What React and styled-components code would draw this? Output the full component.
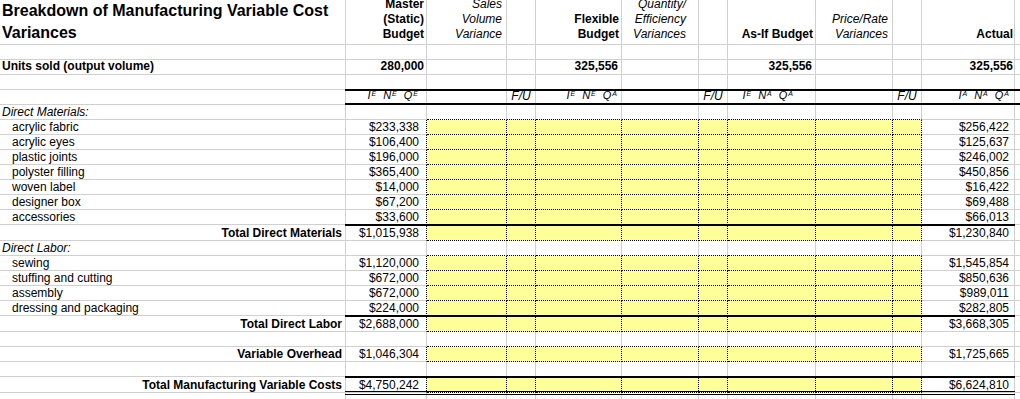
import React from "react";
import styled, { createGlobalStyle, css } from "styled-components";

const GlobalStyle = createGlobalStyle`
  html, body {
    margin: 0;
    padding: 0;
    background: #ffffff;
  }
  body {
    font-family: "Liberation Sans", Arial, sans-serif;
    font-size: 12px;
    color: #000000;
  }
`;

// === Sheet constants ===
const COLUMNS = "346px 81px 80px 29px 86px 77px 29px 88px 77px 29px 93px 1fr";
const GRID = "#d0d0d0";
const YELLOW = "#ffff99";
const VARIANCE_COLS = [0, 1, 2, 3, 4, 5, 6, 7];

// === Styled Components ===
const Sheet = styled.div`
  width: 1020px;
  height: 399px;
  overflow: hidden;
  display: flex;
  flex-direction: column;
`;

const Row = styled.div`
  flex: none;
  display: grid;
  grid-template-columns: ${COLUMNS};
  height: ${(p) => p.$h || 15}px;
`;

const Cell = styled.div`
  position: relative;
  box-sizing: border-box;
  min-width: 0;
  display: flex;
  flex-direction: column;
  justify-content: ${(p) => (p.$valign === "top" ? "flex-start" : "flex-end")};
  text-align: ${(p) => p.$align || "left"};
  padding: 0 ${(p) => p.$pr ?? 2}px ${(p) => p.$pb || 0}px ${(p) => p.$pl ?? 2}px;
  line-height: ${(p) => p.$lh || 14}px;
  font-weight: ${(p) => (p.$bold ? 700 : 400)};
  font-style: ${(p) => (p.$italic ? "italic" : "normal")};
  white-space: nowrap;
  overflow: hidden;
  background: ${(p) => (p.$fill ? YELLOW : "transparent")};
  border-right: ${(p) =>
    p.$last ? "none" : p.$fill || p.$edgeR ? "1px dotted #000" : `1px solid ${GRID}`};
  border-bottom: ${(p) => (p.$fill || p.$dotB ? "1px dotted #000" : `1px solid ${GRID}`)};

  ${(p) =>
    p.$thick &&
    css`
      overflow: visible;
      &::before {
        content: "";
        position: absolute;
        left: -1px;
        right: -1px;
        top: -1px;
        height: 2px;
        background: #000;
        z-index: 2;
      }
    `}

  ${(p) =>
    p.$thickB &&
    css`
      overflow: visible;
      &::after {
        content: "";
        position: absolute;
        left: -1px;
        right: -1px;
        bottom: -1px;
        height: 2px;
        background: #000;
        z-index: 2;
      }
    `}

  ${(p) =>
    p.$double &&
    css`
      overflow: visible;
      &::after {
        content: "";
        position: absolute;
        left: -1px;
        right: -1px;
        top: calc(100% - 1px);
        height: 4px;
        box-sizing: border-box;
        border-top: 1px solid #000;
        border-bottom: 1px solid #000;
        z-index: 2;
      }
    `}
`;

const HeadCell = styled(Cell)`
  line-height: 15px;
  padding-bottom: 2px;
`;

const Title = styled.div`
  font-size: 16px;
  line-height: 22px;
  font-weight: 700;
`;

const Sym = styled.span`
  font-style: italic;
  font-size: 11px;
  line-height: 10px;
  white-space: nowrap;
`;

const Sup = styled.span`
  display: inline-block;
  font-size: 7px;
  line-height: 6px;
  vertical-align: 3px;
  margin: 0 ${(p) => (p.$end ? 0 : 7)}px 0 1px;
`;

// === Data ===
const materials = [
  ["acrylic fabric", "$233,338", "$256,422"],
  ["acrylic eyes", "$106,400", "$125,637"],
  ["plastic joints", "$196,000", "$246,002"],
  ["polyster filling", "$365,400", "$450,856"],
  ["woven label", "$14,000", "$16,422"],
  ["designer box", "$67,200", "$69,488"],
  ["accessories", "$33,600", "$66,013"],
];

const labor = [
  ["sewing", "$1,120,000", "$1,545,854"],
  ["stuffing and cutting", "$672,000", "$850,636"],
  ["assembly", "$672,000", "$989,011"],
  ["dressing and packaging", "$224,000", "$282,805"],
];

// === Pieces ===
const Inq = ({ code }) => (
  <Sym>
    I<Sup>{code[0]}</Sup>N<Sup>{code[1]}</Sup>Q<Sup $end>{code[2]}</Sup>
  </Sym>
);

const LineRow = ({ label, kind, master, actual, fill, pre, thick, double, h }) => (
  <Row $h={h}>
    <Cell
      $align={kind === "total" ? "right" : "left"}
      $pl={kind === "item" ? 12 : 2}
      $pr={3}
      $bold={kind === "total"}
      $italic={kind === "section"}
    >
      {label}
    </Cell>
    <Cell $align="right" $pr={7} $edgeR={fill} $thick={thick} $double={double}>
      {master}
    </Cell>
    {VARIANCE_COLS.map((i) => (
      <Cell key={i} $fill={fill} $dotB={pre} $thick={thick} $double={double} />
    ))}
    <Cell $align="right" $pr={5} $thick={thick} $double={double}>
      {actual}
    </Cell>
    <Cell $last />
  </Row>
);

const BlankRow = ({ pre }) => <LineRow pre={pre} />;

export default function App() {
  return (
    <>
      <GlobalStyle />
      <Sheet>
        <Row $h={45}>
          <Cell $pb={0}>
            <Title>
              Breakdown of Manufacturing Variable Cost
              <br />
              Variances
            </Title>
          </Cell>
          <HeadCell $align="right" $bold>
            <div>
              Master
              <br />
              (Static)
              <br />
              Budget
            </div>
          </HeadCell>
          <HeadCell $align="right" $pr={4} $italic>
            <div>
              Sales
              <br />
              Volume
              <br />
              Variance
            </div>
          </HeadCell>
          <HeadCell />
          <HeadCell $align="right" $bold>
            <div>
              Flexible
              <br />
              Budget
            </div>
          </HeadCell>
          <HeadCell $align="right" $pr={12} $italic $pb={3}>
            <div>
              Quantity/
              <br />
              Efficiency
              <br />
              Variances
            </div>
          </HeadCell>
          <HeadCell />
          <HeadCell $align="right" $bold>
            <div>As-If Budget</div>
          </HeadCell>
          <HeadCell $align="right" $pr={4} $italic $pb={3}>
            <div>
              Price/Rate
              <br />
              Variances
            </div>
          </HeadCell>
          <HeadCell />
          <HeadCell $align="right" $bold $pr={1}>
            <div>Actual</div>
          </HeadCell>
          <HeadCell $last />
        </Row>

        <BlankRow />

        <Row>
          <Cell $bold $pb={1}>Units sold (output volume)</Cell>
          <Cell $bold $align="right" $pb={1}>280,000</Cell>
          <Cell />
          <Cell />
          <Cell $bold $align="right" $pr={3} $pb={1}>325,556</Cell>
          <Cell />
          <Cell />
          <Cell $bold $align="right" $pr={3} $pb={1}>325,556</Cell>
          <Cell />
          <Cell />
          <Cell $bold $align="right" $pr={1} $pb={1}>325,556</Cell>
          <Cell $last />
        </Row>

        <BlankRow />

        <Row>
          <Cell />
          <Cell $valign="top" $align="right" $pr={8} $thick $thickB>
            <Inq code="EEE" />
          </Cell>
          <Cell $thick $thickB />
          <Cell $valign="top" $align="center" $lh={12} $italic $thick $thickB>
            F/U
          </Cell>
          <Cell $valign="top" $align="right" $pr={4} $thick $thickB>
            <Inq code="EEA" />
          </Cell>
          <Cell $thick $thickB />
          <Cell $valign="top" $align="center" $lh={12} $italic $thick $thickB>
            F/U
          </Cell>
          <Cell $valign="top" $align="right" $pr={22} $thick $thickB>
            <Inq code="EAA" />
          </Cell>
          <Cell $thick $thickB />
          <Cell $valign="top" $align="center" $lh={12} $italic $thick $thickB>
            F/U
          </Cell>
          <Cell $valign="top" $align="right" $pr={5} $thick $thickB>
            <Inq code="AAA" />
          </Cell>
          <Cell $last $thick $thickB />
        </Row>

        <LineRow label="Direct Materials:" kind="section" pre />
        {materials.map(([name, master, actual]) => (
          <LineRow key={name} label={name} kind="item" master={master} actual={actual} fill />
        ))}
        <LineRow
          label="Total Direct Materials"
          kind="total"
          master="$1,015,938"
          actual="$1,230,840"
          fill
          thick
          h={16}
        />

        <LineRow label="Direct Labor:" kind="section" pre />
        {labor.map(([name, master, actual]) => (
          <LineRow key={name} label={name} kind="item" master={master} actual={actual} fill />
        ))}
        <LineRow
          label="Total Direct Labor"
          kind="total"
          master="$2,688,000"
          actual="$3,668,305"
          fill
          thick
          h={16}
        />

        <BlankRow pre />
        <LineRow
          label="Variable Overhead"
          kind="total"
          master="$1,046,304"
          actual="$1,725,665"
          fill
        />
        <BlankRow />
        <LineRow
          label="Total Manufacturing Variable Costs"
          kind="total"
          master="$4,750,242"
          actual="$6,624,810"
          fill
          thick
          double
          h={16}
        />
        <BlankRow />
      </Sheet>
    </>
  );
}
